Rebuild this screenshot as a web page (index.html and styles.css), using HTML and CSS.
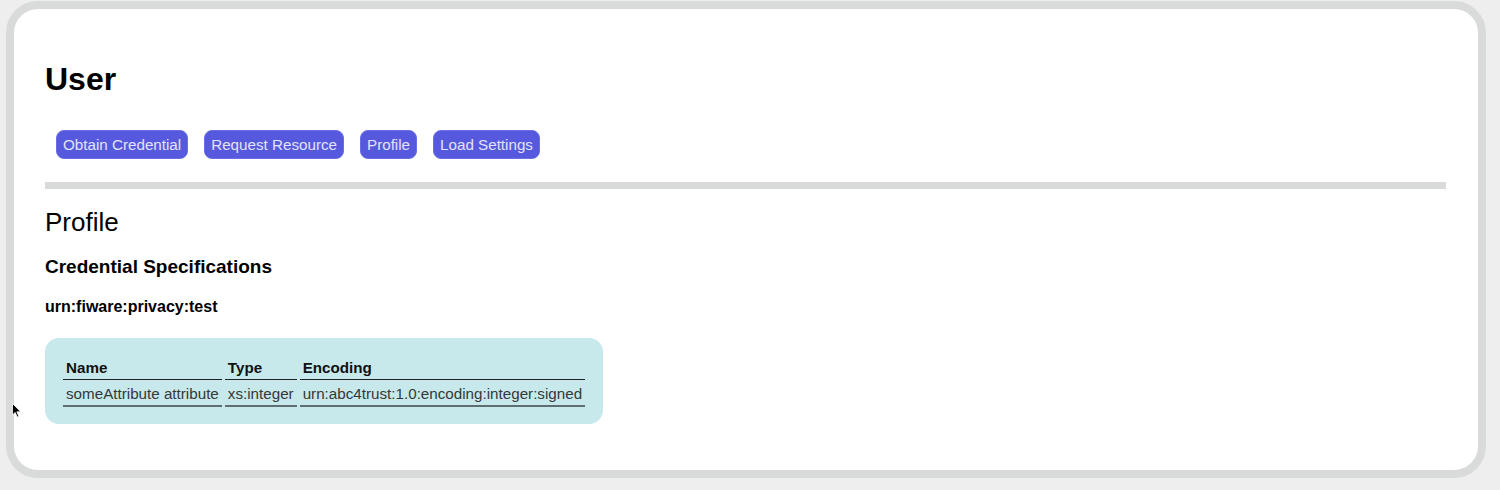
FILE: index.html
```html
<!DOCTYPE html>
<html lang="en">
<head>
<meta charset="utf-8">
<title>User</title>
<link rel="stylesheet" href="styles.css">
</head>
<body>
<div class="card">
  <h1 class="title">User</h1>
  <nav class="actions">
    <button class="btn">Obtain Credential</button>
    <button class="btn">Request Resource</button>
    <button class="btn">Profile</button>
    <button class="btn">Load Settings</button>
  </nav>
  <hr class="rule">
  <h2 class="section">Profile</h2>
  <h3 class="subsection">Credential Specifications</h3>
  <h4 class="spec-id">urn:fiware:privacy:test</h4>
  <div class="spec-box">
    <table class="spec-table">
      <thead>
        <tr><th>Name</th><th>Type</th><th>Encoding</th></tr>
      </thead>
      <tbody>
        <tr><td>someAttribute attribute</td><td>xs:integer</td><td>urn:abc4trust:1.0:encoding:integer:signed</td></tr>
      </tbody>
    </table>
  </div>
</div>
<svg class="cursor" width="10" height="16" viewBox="0 0 10 16"><path d="M0.5 0.5 L0.5 12 L3.2 9.4 L5.2 14 L6.8 13.3 L4.9 8.8 L8.6 8.8 Z" fill="#000" stroke="#fff" stroke-width="0.8"/></svg>
</body>
</html>
```
FILE: styles.css
```css
html, body {
  margin: 0;
  padding: 0;
  background: #eeeeee;
}
body {
  font-family: "Liberation Sans", Arial, sans-serif;
  color: #000;
  width: 1500px;
  height: 490px;
  overflow: hidden;
}
.card {
  box-sizing: border-box;
  margin: 1px 0 0 6px;
  width: 1480px;
  height: 477px;
  border: 8px solid #d9dbdb;
  border-radius: 32px;
  background: #fff;
  padding: 52px 32px 0 31px;
}
.title {
  margin: 0;
  font-size: 32px;
  line-height: 36px;
  font-weight: bold;
}
.actions {
  display: flex;
  gap: 16px;
  margin-top: 33px;
  padding-left: 11px;
}
.btn {
  font-family: "Liberation Sans", Arial, sans-serif;
  font-size: 15.2px;
  line-height: 17px;
  padding: 5px 6px;
  border: 1px solid #6b6ee4;
  border-radius: 8px;
  background: #5659dd;
  color: #e2e3f9;
  cursor: pointer;
}
.rule {
  margin: 23px 0 0 0;
  height: 7px;
  border: 0;
  background: #d9dbdb;
}
.section {
  margin: 18px 0 0 0;
  font-size: 26px;
  line-height: 30px;
  font-weight: normal;
}
.subsection {
  margin: 19px 0 0 0;
  font-size: 19px;
  line-height: 22px;
  font-weight: bold;
}
.spec-id {
  margin: 20px 0 0 0;
  font-size: 16px;
  line-height: 18px;
  font-weight: bold;
}
.spec-box {
  display: inline-block;
  margin-top: 22px;
  padding: 14px 15px 14px 15px;
  background: #c7e9ec;
  border-radius: 14px;
}
.spec-table {
  border-collapse: separate;
  border-spacing: 3px;
  font-size: 15.2px;
  line-height: 17px;
}
.spec-table th {
  text-align: left;
  padding: 4px 3px 3px 3px;
  color: #111;
  font-weight: bold;
  border-bottom: 1px solid #1e2222;
}
.spec-table td {
  padding: 2px 3px 3px 3px;
  color: #353838;
  white-space: nowrap;
  border-bottom: 2px solid #5f6e71;
}
.cursor {
  position: absolute;
  left: 12px;
  top: 403px;
}
```
